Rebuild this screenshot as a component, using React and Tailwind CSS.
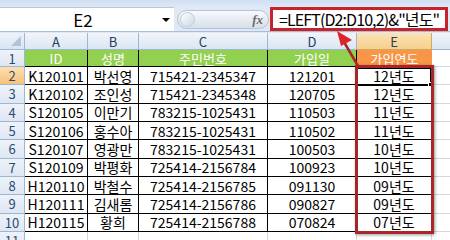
const cols = "grid-cols-[25px_63px_51px_129px_89px_75px_1fr]";

const rows = [
  ["K120101", "박선영", "715421-2345347", "121201", "12년도"],
  ["K120102", "조인성", "715421-2345348", "120705", "12년도"],
  ["S120105", "이만기", "783215-1025431", "110503", "11년도"],
  ["S120106", "홍수아", "783215-1025431", "110502", "11년도"],
  ["S120107", "영광만", "783215-1025431", "100503", "10년도"],
  ["S120109", "박평화", "725414-2156784", "100923", "10년도"],
  ["H120110", "박철수", "725414-2156785", "091130", "09년도"],
  ["H120111", "김새롬", "725414-2156786", "090827", "09년도"],
  ["H120115", "황희", "725414-2156788", "070824", "07년도"],
];

const font = { fontFamily: '"Noto Sans CJK KR", "Noto Sans", sans-serif' };

const RowHead = ({ n, active }) => (
  <div
    className={`flex items-center justify-center overflow-hidden border-r border-b border-[#9eb6ce] text-[13px] text-[#2f4a6c] ${
      active ? "bg-gradient-to-b from-[#fbe0b0] to-[#f7c27b]" : "bg-gradient-to-b from-[#eef3fa] to-[#dde7f4]"
    }`}
  >
    {n}
  </div>
);

export default function App() {
  return (
    <div className="relative w-[450px] h-[240px] overflow-hidden bg-white" style={font}>
      {/* formula bar */}
      <div className="h-[7px] bg-gradient-to-b from-[#cfdff2] to-[#dde8f6]" />
      <div className="flex h-[25px] bg-[#dfe9f5] border-b border-[#a9bdd6]">
        <div className="relative flex w-[174px] items-center bg-white border-t border-[#b8c8dc]">
          <span className="flex-1 text-center text-[17px] leading-none text-black pl-[4px]">E2</span>
          <span className="mr-[4px] w-0 h-0 border-l-[4px] border-r-[4px] border-t-[4px] border-l-transparent border-r-transparent border-t-black" />
        </div>
        <div className="ml-[3px] mt-[3px] flex h-[19px] w-[92px] items-center rounded-full border border-[#b5c3d4] bg-gradient-to-b from-[#f7f9fc] to-[#d7dfe9]">
          <span className="ml-[2px] h-[15px] w-[15px] rounded-full border border-[#c4cdd8] bg-gradient-to-br from-white to-[#cfd8e3]" />
          <span className="ml-auto mr-[5px] text-[13px] italic font-bold text-[#6b6b6b]" style={{ fontFamily: '"Liberation Serif", serif' }}>
            fx
          </span>
        </div>
        <div className="ml-[1px] flex flex-1 mr-[2px] items-center overflow-hidden border-[3px] border-[#c8232b] bg-white">
          <span className="whitespace-nowrap pl-[6px] text-[16px] leading-none tracking-[-0.9px] text-black">=LEFT(D2:D10,2)&amp;"년도"</span>
        </div>
      </div>
      <div className="h-[1px] bg-[#dfe9f5]" />

      {/* sheet */}
      <div className={`grid ${cols} grid-rows-[17px_17px_repeat(9,18.33px)_18px] text-[14px] leading-none`}>
        <div className="relative border-r border-b border-[#9eb6ce] bg-gradient-to-b from-[#eef3fa] to-[#dae4f1]">
          <svg className="absolute right-[3px] bottom-[3px]" width="10" height="10">
            <polygon points="10,0 10,10 0,10" fill="#b4c4d8" />
          </svg>
        </div>
        {["A", "B", "C", "D"].map((c) => (
          <div key={c} className="flex items-center justify-center text-[13px] border-r border-b border-[#9eb6ce] bg-gradient-to-b from-[#f1f5fb] to-[#dbe5f2] text-[#24405f]">
            {c}
          </div>
        ))}
        <div className="flex items-center justify-center text-[13px] border-r border-b border-[#d0a95e] bg-gradient-to-b from-[#fbe3b4] to-[#f6cf8e] text-[#24405f]">E</div>
        <div className="border-b border-[#9eb6ce] bg-gradient-to-b from-[#f1f5fb] to-[#dbe5f2]" />

        {/* row 1 */}
        <RowHead n={1} />
        {["ID", "성명", "주민번호", "가입일"].map((h) => (
          <div key={h} className="flex items-center justify-center text-[13px] bg-[#92d050] text-white border-r border-b border-black">
            {h}
          </div>
        ))}
        <div className="flex items-center justify-center text-[13px] bg-[#f79646] text-white border-b border-black">가입연도</div>
        <div className="border-b border-[#d0d7e5]" />

        {rows.map((r, i) => (
          <div key={i} className="contents">
            <RowHead n={i + 2} active={i === 0} />
            {r.map((v, j) => (
              <div key={j} className="flex items-center justify-center border-r border-b border-black text-black">
                {v}
              </div>
            ))}
            <div className="border-b border-[#d0d7e5]" />
          </div>
        ))}

        <RowHead n={11} />
        <div className="border-r border-[#d0d7e5]" />
        <div className="border-r border-[#d0d7e5]" />
        <div className="border-r border-[#d0d7e5]" />
        <div className="border-r border-[#d0d7e5]" />
        <div className="border-r border-[#d0d7e5]" />
        <div />
      </div>

      {/* active cell E2 */}
      <div className="absolute left-[356px] top-[67px] w-[76px] h-[19px] border-2 border-black">
        <span className="absolute -right-[3px] -bottom-[3px] w-[5px] h-[5px] bg-black border border-white" />
      </div>

      {/* red annotation frame */}
      <div className="absolute left-[355px] top-[65px] w-[79px] h-[169px] border-[3px] border-[#a8262a] shadow-[1px_1px_3px_rgba(0,0,0,0.4)]" />

      {/* arrow */}
      <svg className="absolute left-0 top-0" width="450" height="240">
        <line x1="358" y1="66" x2="344" y2="42" stroke="#a8262a" strokeWidth="2.5" />
        <polygon points="337,31 352,40 341,46" fill="#e0242c" />
      </svg>
    </div>
  );
}
